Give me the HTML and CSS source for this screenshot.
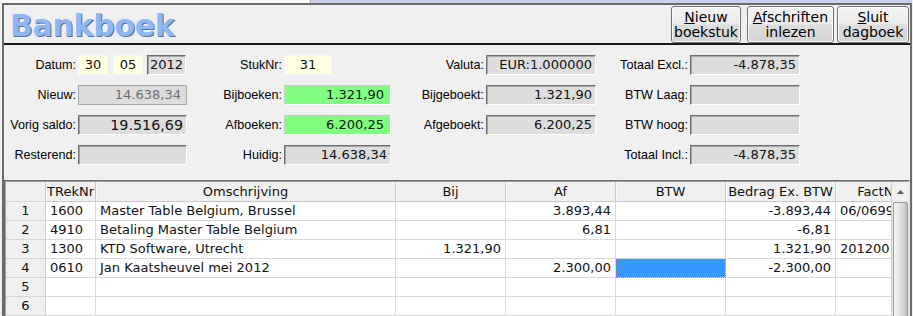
FILE: index.html
```html
<!DOCTYPE html>
<html>
<head>
<meta charset="utf-8">
<link rel="stylesheet" href="styles.css">
</head>
<body>
<div class="topstrip"><div class="ts-a"></div><div class="ts-b"></div></div>
<div class="window">
  <div class="header">
    <div class="title">Bankboek</div>
    <div class="buttons">
      <div class="btn b1"><span><u>N</u>ieuw</span><span>boekstuk</span></div>
      <div class="btn b2"><span><u>A</u>fschriften</span><span>inlezen</span></div>
      <div class="btn b3"><span><u>S</u>luit</span><span>dagboek</span></div>
    </div>
  </div>
  <div class="rule"></div>
  <div class="form">
    <div class="lbl">Datum:</div>
    <div class="dates"><div class="fld yellow d1">30</div><div class="fld yellow d2">05</div><div class="fld sunk d3">2012</div></div>
    <div class="lbl">StukNr:</div>
    <div class="cell"><div class="fld yellow stuk">31</div></div>
    <div class="lbl">Valuta:</div>
    <div class="fld sunk num">EUR:1.000000</div>
    <div class="lbl">Totaal Excl.:</div>
    <div class="fld sunk num">-4.878,35</div>

    <div class="lbl">Nieuw:</div>
    <div class="fld dis num">14.638,34</div>
    <div class="lbl">Bijboeken:</div>
    <div class="fld green num">1.321,90</div>
    <div class="lbl">Bijgeboekt:</div>
    <div class="fld sunk num">1.321,90</div>
    <div class="lbl">BTW Laag:</div>
    <div class="fld sunk num"></div>

    <div class="lbl">Vorig saldo:</div>
    <div class="fld sunk num big">19.516,69</div>
    <div class="lbl">Afboeken:</div>
    <div class="fld green num">6.200,25</div>
    <div class="lbl">Afgeboekt:</div>
    <div class="fld sunk num">6.200,25</div>
    <div class="lbl">BTW hoog:</div>
    <div class="fld sunk num"></div>

    <div class="lbl">Resterend:</div>
    <div class="fld sunk num"></div>
    <div class="lbl">Huidig:</div>
    <div class="fld sunk num">14.638,34</div>
    <div class="lbl"></div>
    <div class="cell"></div>
    <div class="lbl">Totaal Incl.:</div>
    <div class="fld sunk num">-4.878,35</div>
  </div>
  <div class="grid">
    <div class="grid-in">
      <div class="gbody">
        <div class="tbl">
          <div class="h ind"></div><div class="h">TRekNr</div><div class="h">Omschrijving</div><div class="h">Bij</div><div class="h">Af</div><div class="h">BTW</div><div class="h">Bedrag Ex. BTW</div><div class="h">FactNr</div>

          <div class="ind">1</div><div class="c">1600</div><div class="c">Master Table Belgium, Brussel</div><div class="c r"></div><div class="c r">3.893,44</div><div class="c"></div><div class="c r">-3.893,44</div><div class="c">06/0699</div>
          <div class="ind">2</div><div class="c">4910</div><div class="c">Betaling Master Table Belgium</div><div class="c r"></div><div class="c r">6,81</div><div class="c"></div><div class="c r">-6,81</div><div class="c"></div>
          <div class="ind">3</div><div class="c">1300</div><div class="c">KTD Software, Utrecht</div><div class="c r">1.321,90</div><div class="c r"></div><div class="c"></div><div class="c r">1.321,90</div><div class="c">2012003</div>
          <div class="ind">4</div><div class="c">0610</div><div class="c">Jan Kaatsheuvel mei 2012</div><div class="c r"></div><div class="c r">2.300,00</div><div class="c sel"></div><div class="c r">-2.300,00</div><div class="c"></div>
          <div class="ind">5</div><div class="c"></div><div class="c"></div><div class="c"></div><div class="c"></div><div class="c"></div><div class="c"></div><div class="c"></div>
          <div class="ind">6</div><div class="c"></div><div class="c"></div><div class="c"></div><div class="c"></div><div class="c"></div><div class="c"></div><div class="c"></div>
          <div class="ind">7</div><div class="c"></div><div class="c"></div><div class="c"></div><div class="c"></div><div class="c"></div><div class="c"></div><div class="c"></div>
        </div>
      </div>
      <div class="vscroll">
        <div class="sb-up"><svg width="7" height="4" viewBox="0 0 7 4"><path d="M0 4 L3.5 0 L7 4 Z" fill="#5a5a5a"/></svg></div>
        <div class="sb-thumb"></div>
      </div>
    </div>
  </div>
</div>
</body>
</html>
```

FILE: styles.css
```css
html, body {
  margin: 0;
  padding: 0;
  width: 913px;
  height: 316px;
  overflow: hidden;
  background: #f0f0f0;
}

.topstrip {
  display: flex;
  height: 3px;
  margin-left: 2px;
  width: 910px;
}
.ts-a {
  width: 308px;
  background: #fafafa;
  border-right: 1px solid #a9a9a9;
}
.ts-b {
  flex: 1;
  background: #c9d1e6;
}

.window {
  margin-left: 2px;
  width: 906px;
  height: 340px;
  border: 2px solid #6b6b6b;
  border-bottom: none;
  background: #f0f0f0;
}

.header {
  display: flex;
  justify-content: space-between;
  height: 38px;
}
.title {
  font-family: "DejaVu Sans", Verdana, sans-serif;
  font-weight: bold;
  font-size: 30px;
  line-height: 30px;
  color: #8fb7f3;
  text-shadow: 1px 1px 0 #5f6e93;
  padding: 6px 0 0 6px;
  letter-spacing: -0.3px;
}
.buttons {
  display: flex;
  padding-top: 1px;
  padding-right: 1px;
}
.btn {
  box-sizing: border-box;
  height: 37px;
  border: 1px solid #707070;
  border-radius: 3px;
  background: linear-gradient(#f3f3f3 0%, #ebebeb 48%, #dddddd 52%, #d3d3d3 100%);
  box-shadow: inset 0 0 0 1px #fbfbfb;
  display: flex;
  flex-direction: column;
  align-items: center;
  justify-content: center;
  font-family: "DejaVu Sans", Verdana, sans-serif;
  font-size: 14px;
  line-height: 15px;
  color: #000;
}
.btn u { text-decoration: underline; text-underline-offset: 1px; }
.b1 { width: 70px; margin-right: 6px; }
.b2 { width: 87px; margin-right: 3px; }
.b3 { width: 72px; }

.rule {
  height: 2px;
  background: #1a1a1a;
}

.form {
  display: grid;
  grid-template-columns: 74px 109px 97px 107px 95px 110px 94px 110px;
  grid-auto-rows: 20px;
  row-gap: 10px;
  padding: 10px 0 15px 0;
}
.lbl {
  font-family: "Liberation Sans", Arial, sans-serif;
  font-size: 12.6px;
  line-height: 20px;
  text-align: right;
  padding-right: 2px;
  color: #000;
  white-space: nowrap;
}
.dates {
  display: flex;
}
.fld {
  box-sizing: border-box;
  height: 20px;
  font-family: "DejaVu Sans", Verdana, sans-serif;
  font-size: 13px;
  line-height: 18px;
  color: #111;
  white-space: nowrap;
}
.num {
  text-align: right;
  padding-right: 3px;
}
.sunk {
  background: #dddddd;
  border: 1px solid;
  border-color: #6e6e6e #ffffff #ffffff #6e6e6e;
  box-shadow: inset 1px 1px 0 #a6a6a6;
}
.dis {
  background: #dcdcdc;
  border: 1px solid #a8a8a8;
  color: #6d6d6d;
  padding-right: 5px;
}
.green {
  background: #80ff80;
  border: 1px solid;
  border-color: #c8c8c8 #ffffff #ffffff #c8c8c8;
  padding-right: 6px;
}
.yellow {
  background: #ffffe1;
  border: 1px solid #f7f7f7;
  text-align: center;
}
.d1 { width: 30px; margin-right: 5px; }
.d2 { width: 30px; margin-right: 4px; }
.d3 { width: 39px; text-align: center; }
.stuk { width: 48px; }
.big { font-size: 14.3px; }

.grid {
  width: 906px;
  box-sizing: border-box;
  border: 1px solid;
  border-color: #6a6a6a #e3e3e3 #e3e3e3 #6a6a6a;
}
.grid-in {
  display: flex;
  border-top: 1px solid #a0a0a0;
  border-left: 1px solid #a0a0a0;
  background: #ffffff;
  height: 160px;
}
.gbody {
  width: 886px;
  overflow: hidden;
}
.tbl {
  display: grid;
  grid-template-columns: 40px 50px 300px 110px 110px 110px 110px 85px;
  grid-template-rows: 20px;
  grid-auto-rows: 19px;
  width: 915px;
  font-family: "DejaVu Sans", Verdana, sans-serif;
  font-size: 13px;
  color: #111;
}
.tbl > div {
  box-sizing: border-box;
  border-right: 1px solid #d9d9d9;
  border-bottom: 1px solid #d9d9d9;
  line-height: 18px;
  padding: 0 4px;
  white-space: nowrap;
  overflow: hidden;
}
.tbl .h {
  background: #f0f0f0;
  text-align: center;
  border-right: 1px solid #c9c9c9;
  border-bottom: 1px solid #c9c9c9;
  box-shadow: inset 1px 0 0 #fbfbfb;
  line-height: 19px;
  padding: 0 1px;
}
.tbl .ind {
  background: #f0f0f0;
  text-align: center;
  border-right: 1px solid #c9c9c9;
  border-bottom: 1px solid #d6d6d6;
}
.tbl .r { text-align: right; }
.tbl .sel {
  background: #3399ff;
  outline: 1px dotted #d9791a;
  outline-offset: -1px;
}

.vscroll {
  width: 17px;
  background: #eaeaea;
  border-left: 1px solid #cfcfcf;
  display: flex;
  flex-direction: column;
}
.sb-up {
  height: 19px;
  display: flex;
  align-items: center;
  justify-content: center;
  background: #f0f0f0;
}
.sb-thumb {
  flex: 1;
  margin: 1px 1px 0 1px;
  border: 1px solid #9a9a9a;
  border-radius: 2px;
  background: linear-gradient(to right, #f6f6f6 0%, #e6e6e6 40%, #d2d2d2 75%, #bcbcbc 100%);
}
```
